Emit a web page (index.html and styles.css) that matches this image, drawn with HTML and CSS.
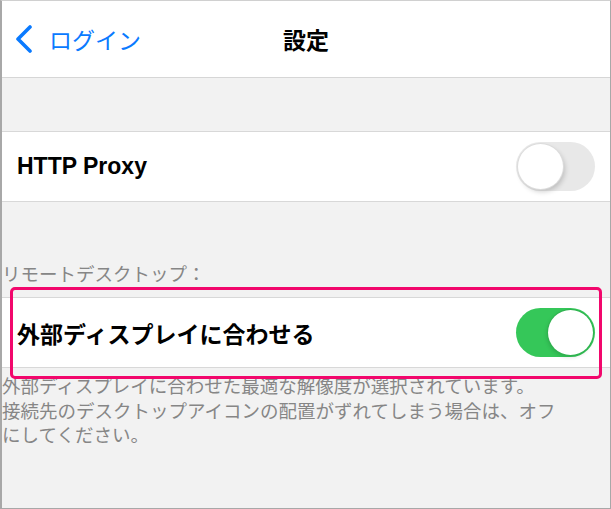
FILE: index.html
```html
<!DOCTYPE html>
<html lang="ja">
<head>
    <meta charset="UTF-8">
    <meta name="viewport" content="width=device-width, initial-scale=1.0">
    <title>設定</title>
    <link rel="stylesheet" href="styles.css">
</head>
<body>
    <div id="screen">
        <div id="nav">
            <a class="back" href="#">
                <svg width="20" height="28" viewBox="0 0 20 28"><polyline points="16,2 4,14 16,26" fill="none" stroke="#0a7aff" stroke-width="3.6" stroke-linecap="round" stroke-linejoin="round"/></svg>
                <span>ログイン</span>
            </a>
            <h1 id="title">設定</h1>
            <div></div>
        </div>
        <div class="spacer"></div>
        <div class="row">
            <span class="label">HTTP Proxy</span>
            <span class="toggle"><span class="knob"></span></span>
        </div>
        <div class="section-head">リモートデスクトップ：</div>
        <div class="row">
            <span class="label">外部ディスプレイに合わせる</span>
            <span class="toggle on"><span class="knob"></span></span>
        </div>
        <p class="note">外部ディスプレイに合わせた最適な解像度が選択されています。<br>接続先のデスクトップアイコンの配置がずれてしまう場合は、オフ<br>にしてください。</p>
        <div class="highlight"></div>
    </div>
</body>
</html>
```

FILE: styles.css
```css
body{
    margin: 0;
    font-family: "Liberation Sans", "Noto Sans CJK JP", sans-serif;
    background-color: #f2f2f2;
}
#screen{
    position: relative;
    box-sizing: border-box;
    width: 611px;
    height: 509px;
    border: 1px solid #a8a8a8;
    border-left-width: 2px;
    border-top-color: #d0d0d0;
    background-color: #f2f2f2;
    overflow: hidden;
}
#nav{
    height: 76px;
    background-color: #fff;
    border-bottom: 1px solid #d6d6d6;
    display: grid;
    grid-template-columns: 1fr auto 1fr;
    align-items: center;
}
.back{
    display: flex;
    align-items: center;
    gap: 15px;
    padding-left: 12px;
    color: #0a7aff;
    text-decoration: none;
    font-size: 23px;
}
#title{
    margin: 0;
    font-size: 23px;
    font-weight: bold;
    color: #000;
}
.spacer{
    height: 53px;
}
.row{
    height: 69px;
    background-color: #fff;
    border-top: 1px solid #d8d8d8;
    border-bottom: 1px solid #d8d8d8;
    display: flex;
    align-items: center;
    justify-content: space-between;
    padding: 0 15px 0 15px;
}
.label{
    font-size: 23px;
    font-weight: bold;
    color: #000;
}
.toggle{
    position: relative;
    box-sizing: border-box;
    width: 79px;
    height: 49px;
    border-radius: 25px;
    background-color: #e8e8e8;
}
.knob{
    position: absolute;
    top: 2px;
    left: 2px;
    width: 45px;
    height: 45px;
    border-radius: 50%;
    background-color: #fff;
    box-shadow: 0 0 0 1px #dcdcdc, 2px 3px 5px rgba(0, 0, 0, 0.18);
}
.toggle.on{
    background-color: #35c759;
}
.toggle.on .knob{
    left: 32px;
    box-shadow: 0 0 0 1px #2fb24f, -1px 2px 4px rgba(0, 0, 0, 0.15);
}
.section-head{
    height: 85px;
    padding-bottom: 10px;
    display: flex;
    align-items: flex-end;
    font-size: 18.5px;
    line-height: 24px;
    color: #868686;
}
.note{
    margin: 0;
    padding-top: 7px;
    font-size: 18.5px;
    line-height: 24.5px;
    color: #868686;
}
.highlight{
    position: absolute;
    left: 8px;
    top: 286px;
    width: 586px;
    height: 86px;
    border: 3px solid #f2076c;
    border-radius: 5px;
}
```
